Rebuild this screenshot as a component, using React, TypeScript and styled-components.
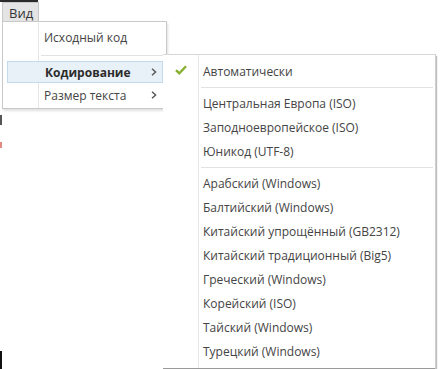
import React from 'react'
import styled, { createGlobalStyle } from 'styled-components'

const GlobalStyle = createGlobalStyle`
  html, body {
    margin: 0;
    padding: 0;
    background: #ffffff;
  }
  body {
    font-family: 'Open Sans', 'Noto Sans', 'Liberation Sans', sans-serif;
    font-size: 12px;
    color: #3c3c3c;
  }
`

const Screen = styled.div`
  position: relative;
  width: 440px;
  height: 369px;
  overflow: hidden;
  background: #ffffff;
`

const MenuBar = styled.div`
  display: flex;
  height: 21px;
  border-top: 2px solid #2a2a2a;
  width: 38px;
`

const BarItem = styled.div`
  display: flex;
  align-items: center;
  padding: 0 5px 0 6px;
  margin-left: 2px;
  background: #e4e4e4;
  border: 1px solid #c8c8c8;
  border-bottom: none;
  font-size: 13px;
  color: #333333;
`

const Dropdown = styled.div`
  position: absolute;
  left: 2px;
  top: 21px;
  width: 163px;
  padding: 3px 0 1px;
  background: #ffffff;
  border: 1px solid #c9c9c9;
  box-shadow: 1px 2px 2px rgba(0, 0, 0, 0.12);
  display: flex;
  flex-direction: column;
  background-image: linear-gradient(#e6e6e6, #e6e6e6);
  background-size: 1px 100%;
  background-position: 35px 0;
  background-repeat: no-repeat;
`

const Row = styled.div<{ $active?: boolean; $bold?: boolean }>`
  display: flex;
  align-items: center;
  height: ${(p) => (p.$active ? '20px' : '24px')};
  margin: ${(p) => (p.$active ? '0 3px 0 4px' : '0')};
  padding-left: ${(p) => (p.$active ? '37px' : '41px')};
  padding-right: ${(p) => (p.$active ? '5px' : '9px')};
  background: ${(p) => (p.$active ? '#e8f0f8' : 'transparent')};
  border: ${(p) => (p.$active ? '1px solid #c5d8ec' : 'none')};
  font-weight: ${(p) => (p.$bold ? 700 : 400)};
  color: ${(p) => (p.$bold ? '#2c2c2c' : '#444444')};
  white-space: nowrap;
`

const Label = styled.span`
  flex: 1;
`

const Arrow = styled.svg`
  width: 6px;
  height: 8px;
`

const Divider = styled.div<{ $left: number; $gap?: number }>`
  height: 1px;
  margin: ${(p) => p.$gap ?? 4}px 2px ${(p) => (p.$gap ?? 4) - 1}px ${(p) => p.$left}px;
  background: #e2e2e2;
`

const Submenu = styled.div`
  position: absolute;
  left: 163px;
  top: 54px;
  width: 272px;
  padding: 4px 0 0;
  height: 309px;
  background: #ffffff;
  border-top: 1px solid #d6d6d6;
  border-right: 1px solid #d0d0d0;
  border-bottom: 2px solid #9a9a9a;
  box-shadow: 1px 2px 1px rgba(0, 0, 0, 0.25);
  display: flex;
  flex-direction: column;
  background-image: linear-gradient(#e6e6e6, #e6e6e6);
  background-size: 1px 100%;
  background-position: 35px 0;
  background-repeat: no-repeat;
`

const SubRow = styled.div`
  display: flex;
  align-items: center;
  height: 24px;
  color: #444444;
  white-space: nowrap;
`

const CheckCell = styled.div`
  width: 40px;
  display: flex;
  justify-content: center;
  padding: 0 4px 2px 0;
  box-sizing: border-box;
`

const Fragment = styled.div<{ $color: string; $h: number }>`
  position: absolute;
  left: 0;
  width: 2px;
  height: ${(p) => p.$h}px;
  background: ${(p) => p.$color};
`

const Chevron = () => (
  <Arrow viewBox="0 0 6 8">
    <path d="M1 0.8 L4.6 4 L1 7.2" fill="none" stroke="#555" strokeWidth="1.4" />
  </Arrow>
)

const Check = () => (
  <svg width="12" height="10" viewBox="0 0 12 10">
    <path d="M1 5.2 L4.3 8.3 L11 1.2" fill="none" stroke="#86b02e" strokeWidth="2.4" />
  </svg>
)

const groups = [
  ['Центральная Европа (ISO)', 'Заподноевропейское (ISO)', 'Юникод (UTF-8)'],
  [
    'Арабский (Windows)',
    'Балтийский (Windows)',
    'Китайский упрощённый (GB2312)',
    'Китайский традиционный (Big5)',
    'Греческий (Windows)',
    'Корейский (ISO)',
    'Тайский (Windows)',
    'Турецкий (Windows)',
  ],
]

const App = () => (
  <Screen>
    <GlobalStyle />
    <MenuBar>
      <BarItem>Вид</BarItem>
    </MenuBar>
    <Fragment $color="#555" $h={10} style={{ top: 115 }} />
    <Fragment $color="#e08a80" $h={6} style={{ top: 142 }} />
    <Fragment $color="#111" $h={18} style={{ top: 351 }} />
    <Dropdown>
      <Row>
        <Label>Исходный код</Label>
      </Row>
      <Divider $left={38} $gap={6} />
      <Row $active $bold>
        <Label>Кодирование</Label>
        <Chevron />
      </Row>
      <Row>
        <Label>Размер текста</Label>
        <Chevron />
      </Row>
    </Dropdown>
    <Submenu>
      <SubRow>
        <CheckCell>
          <Check />
        </CheckCell>
        Автоматически
      </SubRow>
      {groups.map((g, i) => (
        <React.Fragment key={i}>
          <Divider $left={38} />
          {g.map((t) => (
            <SubRow key={t}>
              <CheckCell />
              {t}
            </SubRow>
          ))}
        </React.Fragment>
      ))}
    </Submenu>
  </Screen>
)

export default App
